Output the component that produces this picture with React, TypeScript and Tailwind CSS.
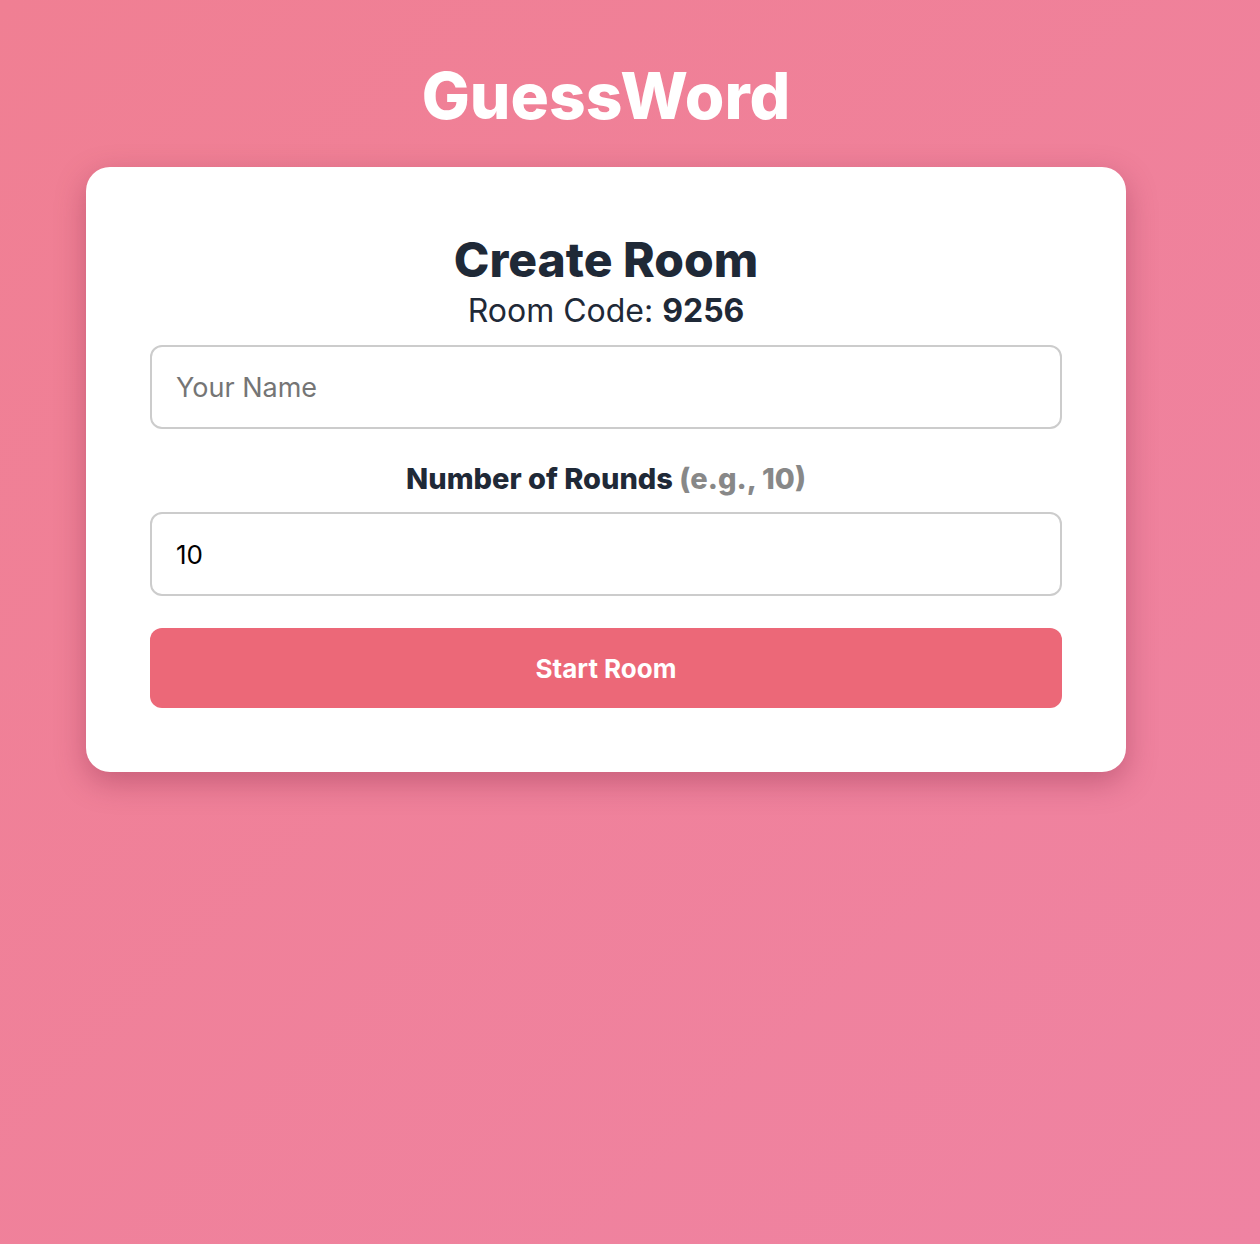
import { useState } from 'react';

export default function App() {
  const [name, setName] = useState('');
  const [rounds, setRounds] = useState('10');

  return (
    <div
      className="min-h-screen w-full bg-[linear-gradient(135deg,#f07f93_0%,#ef83a2_100%)]"
      style={{ fontFamily: 'Inter, "Noto Sans", sans-serif' }}
    >
      <div className="w-[1212px] flex flex-col items-center pt-[58px]">
        <h1 className="text-[64px] leading-[1.2] font-extrabold text-white">
          GuessWord
        </h1>

        <div className="mt-[32px] w-[1040px] bg-white rounded-[24px] p-[64px] shadow-[0_10px_30px_rgba(120,30,60,0.35)] flex flex-col">
          <h2 className="text-[48px] leading-[1.2] font-extrabold text-[#1f2937] text-center">
            Create Room
          </h2>
          <p className="text-[32px] leading-[45px] text-[#1f2937] text-center">
            Room Code: <span className="font-bold">9256</span>
          </p>

          <input
            type="text"
            placeholder="Your Name"
            value={name}
            onChange={(e) => setName(e.target.value)}
            className="mt-[12px] h-[84px] w-full rounded-[12px] border-2 border-[#cccccc] px-[24px] text-[27px] text-black placeholder:text-[#757575] outline-none"
          />

          <label className="mt-[32px] mb-[15px] text-[29px] leading-[36px] font-extrabold text-[#1f2937] text-center">
            Number of Rounds <span className="text-[#888888]">(e.g., 10)</span>
          </label>

          <input
            type="number"
            value={rounds}
            onChange={(e) => setRounds(e.target.value)}
            className="h-[84px] w-full rounded-[12px] border-2 border-[#cccccc] px-[24px] text-[26px] text-black outline-none [appearance:textfield]"
          />

          <button className="mt-[32px] h-[80px] w-full rounded-[12px] bg-[#ec6878] text-white text-[26px] font-bold">
            Start Room
          </button>
        </div>
      </div>
    </div>
  );
}
